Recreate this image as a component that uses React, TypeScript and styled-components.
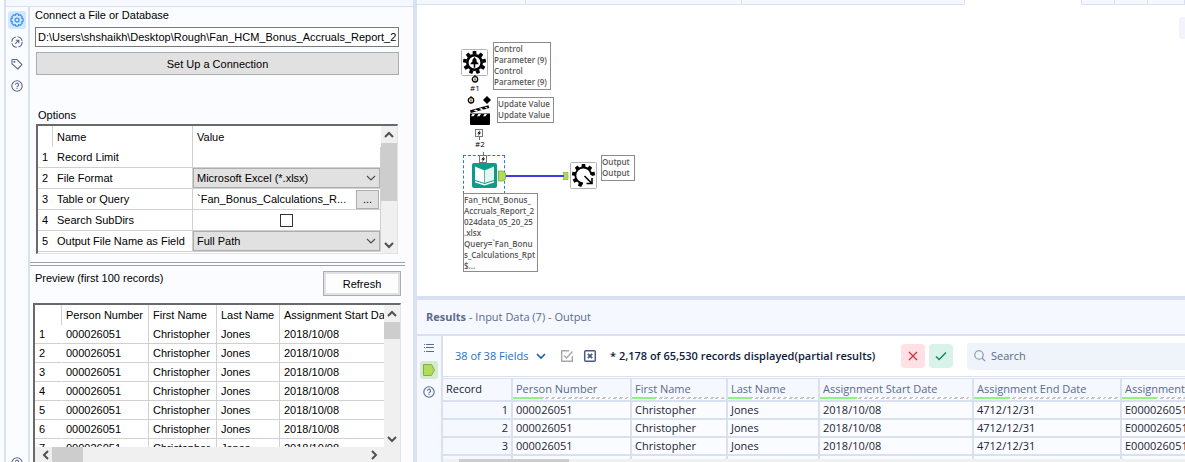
import React from "react";
import styled, { createGlobalStyle, css } from "styled-components";

const line = "#d9e1f0";
const wash = "#f5f8fe";
const slate = "#5b6b8c";
const formFont = '"Liberation Sans", Arial, sans-serif';
const appFont = '"Open Sans", "Noto Sans", "Segoe UI", sans-serif';

const GlobalStyle = createGlobalStyle`
  *, *::before, *::after { box-sizing: border-box; }
  body { margin: 0; overflow: hidden; background: #fff; }
  button, input, select { font: inherit; color: inherit; margin: 0; }
`;

/* ---------- shell ---------- */

const Shell = styled.div`
  display: flex;
  height: 100vh;
  font: 11px/16px ${appFont};
  color: #1b2333;
`;

const ConfigPane = styled.aside`
  flex: 0 0 417px;
  display: flex;
  flex-direction: column;
  padding-left: 4px;
  background: #fafcff;
  border-right: 4px solid ${line};
`;

const ConfigTop = styled.div`
  flex: 0 0 7px;
  background: ${wash};
  border-left: 2px solid ${line};
  border-bottom: 1px solid ${line};
`;

const ConfigBody = styled.div`
  flex: 1;
  min-height: 0;
  display: flex;
  border-left: 2px solid ${line};
`;

const Rail = styled.nav<{ $tone?: string; $width: number; $top: number }>`
  flex: 0 0 ${(p) => p.$width}px;
  display: flex;
  flex-direction: column;
  align-items: center;
  gap: 4px;
  padding-top: ${(p) => p.$top}px;
  color: ${slate};
  background: ${(p) => p.$tone ?? "#fafcff"};
  border-right: 2px solid ${line};
  overflow: hidden;
`;

const RailButton = styled.button<{ $active?: string; $last?: boolean }>`
  flex: 0 0 18px;
  width: 18px;
  display: grid;
  place-items: center;
  padding: 0;
  border: 0;
  border-radius: 3px;
  background: ${(p) => p.$active ?? "transparent"};
  ${(p) => p.$last && css`margin-top: auto; margin-bottom: -10px;`}
`;

const Form = styled.section`
  flex: 1;
  min-width: 0;
  display: flex;
  flex-direction: column;
  font: 11px/16px ${formFont};
  color: #000;
`;

const Connection = styled.div`
  display: flex;
  flex-direction: column;
  padding: 0 14px 0 5px;
`;

const PathInput = styled.input`
  height: 20px;
  margin-top: 4px;
  padding: 0 2px;
  border: 1px solid #7a7a7a;
  background: #fff;
`;

const ConnectButton = styled.button`
  height: 23px;
  margin: 5px 0 0 1px;
  padding: 0;
  background: #e1e1e1;
  border: 1px solid #adadad;
`;

const OptionsTitle = styled.h2`
  margin: 32px 0 1px 8px;
  font: inherit;
`;

const Sunken = styled.div<{ $kind: "options" | "preview" }>`
  display: grid;
  grid-template-columns: 1fr 16px;
  overflow: hidden;
  background: #fff;
  border: 1px solid #e3e3e3;
  border-top: 2px solid #696969;
  border-left: 2px solid #696969;
  ${(p) =>
    p.$kind === "options"
      ? css`flex: 0 0 130px; margin: 0 15px 0 6px;`
      : css`
          flex: 1;
          min-height: 0;
          margin: 7px 12px 0 3px;
          border-bottom: 0;
          grid-template-rows: 1fr 15px;
        `}
`;

const OptionsTable = styled.table`
  width: 100%;
  align-self: start;
  table-layout: fixed;
  border-collapse: separate;
  border-spacing: 0;
  th, td {
    height: 21px;
    padding: 0 0 0 4px;
    text-align: left;
    font-weight: normal;
    white-space: nowrap;
    border-bottom: 1px solid #d0d0d0;
  }
  thead th { border-bottom: 0; }
  thead th:first-child { border-right: 1px solid #d0d0d0; }
  th:nth-child(2) { border-right: 1px solid #d0d0d0; }
  td { border-right: 1px solid #d0d0d0; }
  td:first-child { border-right: 0; }
  td.control { padding: 0; }
`;

const SelectWrap = styled.div`
  display: grid;
  align-items: center;
  height: 20px;
  > * { grid-area: 1 / 1; }
  svg { justify-self: end; margin-right: 4px; pointer-events: none; }
`;

const Drop = styled.select`
  width: 100%;
  height: 20px;
  appearance: none;
  padding: 0 3px;
  background: #e1e1e1;
  border: 1px solid #adadad;
  border-radius: 0;
`;

const QueryCell = styled.div`
  display: flex;
  align-items: center;
  height: 20px;
  padding-left: 4px;
  span { flex: 1; overflow: hidden; }
`;

const DotsButton = styled.button`
  width: 23px;
  height: 19px;
  margin-right: 1px;
  padding: 0;
  line-height: 14px;
  background: #e1e1e1;
  border: 1px solid #adadad;
`;

const TickCell = styled.div`
  display: grid;
  place-items: center;
  height: 20px;
`;

const Tick = styled.input`
  appearance: none;
  width: 13px;
  height: 13px;
  background: #fff;
  border: 1px solid #333;
`;

const Bar = styled.div<{ $across?: boolean }>`
  display: flex;
  flex-direction: ${(p) => (p.$across ? "row" : "column")};
  align-items: center;
  background: #f0f0f0;
  ${(p) => p.$across && css`grid-column: 1 / -1; padding: 0 20px 0 4px;`}
`;

const Thumb = styled.div<{ $size: number }>`
  flex: 0 0 ${(p) => p.$size}px;
  align-self: stretch;
  background: #cdcdcd;
`;

const Arrow = styled.span<{ $size: number; $end?: boolean; $across?: boolean }>`
  flex: 0 0 ${(p) => p.$size}px;
  display: grid;
  place-items: center;
  ${(p) => p.$end && (p.$across ? css`margin-left: auto;` : css`margin-top: auto;`)}
`;

const Splitter = styled.div`
  flex: 0 0 4px;
  margin: 8px 8px 0 0;
  border: solid #a0a0a0;
  border-width: 1px 0;
`;

const PreviewHead = styled.div`
  display: flex;
  align-items: flex-start;
  justify-content: space-between;
  margin: 4px 12px 0 5px;
`;

const RefreshButton = styled.button`
  width: 78px;
  height: 25px;
  margin-top: 1px;
  padding: 0;
  background: #fdfdfd;
  border: 1px solid #adadad;
  box-shadow: inset 0 0 0 2px #e1e1e1;
`;

const Clip = styled.div`
  min-width: 0;
  min-height: 0;
  overflow: hidden;
`;

const PreviewTable = styled.table`
  width: 380px;
  table-layout: fixed;
  border-collapse: separate;
  border-spacing: 0;
  th, td {
    height: 19px;
    padding: 0 0 0 4px;
    text-align: left;
    font-weight: normal;
    white-space: nowrap;
    overflow: hidden;
    border-right: 1px solid #d0d0d0;
  }
  th { height: 20px; }
  td { border-bottom: 1px solid #d0d0d0; }
  td:first-child { border-right-color: transparent; }
`;

/* ---------- workspace ---------- */

const Workspace = styled.main`
  flex: 1;
  min-width: 0;
  display: flex;
  flex-direction: column;
`;

const TabStrip = styled.div`
  flex: 0 0 5px;
  display: flex;
  background: ${wash};
`;

const Tab = styled.div<{ $width?: number; $open?: boolean }>`
  flex: ${(p) => (p.$width ? `0 0 ${p.$width}px` : "1")};
  border-right: 1px solid ${line};
  border-bottom: 1px solid ${line};
  ${(p) => p.$open && css`background: #fff; border-bottom-color: #fff;`}
`;

const Canvas = styled.section`
  flex: 1;
  min-height: 0;
  position: relative;
  overflow: hidden;
  background: #fff;
`;

const Placed = styled.div<{ $x: number; $y: number }>`
  position: absolute;
  left: ${(p) => p.$x}px;
  top: ${(p) => p.$y}px;
  svg { display: block; }
`;

const Note = styled(Placed)<{ $w: number; $tall?: boolean }>`
  width: ${(p) => p.$w}px;
  padding-bottom: ${(p) => (p.$tall ? 0 : 2)}px;
  border: 1px solid #8c8c8c;
  background: #fff;
  font: 600 8px/11px ${appFont};
  color: #585858;
  white-space: pre;
`;

const Mark = styled(Placed)`
  font: 8px/10px ${appFont};
  color: #000;
`;

const Selection = styled(Placed)`
  width: 42px;
  height: 39px;
  border: 1px dashed #1c7fd6;
`;

const EdgeButton = styled.button`
  position: absolute;
  right: -18px;
  top: 12px;
  width: 24px;
  height: 22px;
  border: 0;
  border-radius: 4px;
  background: #f3f4fb;
`;

const Results = styled.section`
  flex: 0 0 166px;
  min-height: 0;
  display: flex;
  flex-direction: column;
  border-top: 4px solid ${line};
  background: #fff;
`;

const ResultsTitle = styled.h2`
  flex: 0 0 36px;
  margin: 0;
  padding-left: 9px;
  font: 11px/34px ${appFont};
  color: ${slate};
  background: ${wash};
  border-bottom: 2px solid ${line};
`;

const ResultsBody = styled.div`
  flex: 1;
  min-height: 0;
  display: flex;
`;

const ResultsMain = styled.div`
  flex: 1;
  min-width: 0;
  display: flex;
  flex-direction: column;
`;

const Toolbar = styled.div`
  flex: 0 0 41px;
  display: flex;
  align-items: center;
  padding-left: 12px;
  border-bottom: 1px solid ${line};
  overflow: hidden;
`;

const FieldsButton = styled.button`
  flex: 0 0 91px;
  display: flex;
  align-items: center;
  justify-content: space-between;
  padding: 0;
  border: 0;
  background: none;
  color: #1a6fc9;
`;

const IconButton = styled.button<{ $gap: number }>`
  display: grid;
  padding: 0;
  margin-left: ${(p) => p.$gap}px;
  border: 0;
  background: none;
`;

const Status = styled.strong`
  flex: 0 0 291px;
  margin-left: 13px;
  white-space: nowrap;
  font-weight: 600;
  color: #0c1b3d;
`;

const ActionButton = styled.button<{ $bg: string }>`
  flex: 0 0 24px;
  height: 24px;
  display: grid;
  place-items: center;
  margin-right: 4px;
  padding: 0;
  border: 0;
  border-radius: 4px;
  background: ${(p) => p.$bg};
`;

const SearchBox = styled.label`
  flex: 1;
  display: flex;
  align-items: center;
  gap: 5px;
  height: 27px;
  margin-left: 10px;
  padding-left: 7px;
  border-radius: 4px 0 0 4px;
  background: #eff3fa;
  input {
    flex: 1;
    min-width: 0;
    padding: 0;
    border: 0;
    background: none;
    outline: 0;
  }
  input::placeholder { color: ${slate}; opacity: 1; }
`;

const GridClip = styled.div`
  flex: 1;
  min-height: 0;
  margin-top: 1px;
  overflow: hidden;
  border-top: 1px solid ${line};
`;

const DataGrid = styled.table`
  width: 829px;
  table-layout: fixed;
  border-collapse: separate;
  border-spacing: 0;
  th, td {
    padding: 0 0 0 3px;
    text-align: left;
    font-weight: normal;
    white-space: nowrap;
    overflow: hidden;
    border-right: 2px solid ${line};
    border-bottom: 2px solid ${line};
  }
  th {
    height: 23px;
    padding: 0;
    vertical-align: top;
    background: ${wash};
    color: ${slate};
  }
  td { height: 18px; line-height: 16px; background: #fbfcff; color: #1b2333; }
  th:first-child { color: #1b2333; }
  td:first-child { text-align: right; padding-right: 3px; background: ${wash}; }
`;

const HeadLabel = styled.div`
  height: 18px;
  padding-left: 3px;
  line-height: 20px;
`;

const Quality = styled.div<{ $ok: number }>`
  display: flex;
  height: 2px;
  margin-right: 2px;
  background: repeating-linear-gradient(135deg, #c4c4c4 0 2px, #fff 2px 4px);
  &::before {
    content: "";
    width: ${(p) => p.$ok}px;
    background: #93f27c;
  }
`;

const GridScroll = styled.div`
  flex: 0 0 3px;
  padding-left: 16px;
  background: #f0f0f0;
  &::before {
    content: "";
    display: block;
    width: 110px;
    height: 3px;
    background: #cdcdcd;
  }
`;

/* ---------- drawings ---------- */

const Chevron = ({ turn = 0, size = 10, color = "#505050", weight = 2 }) => (
  <svg width={size} height={size} viewBox="0 0 10 10" fill="none" stroke={color} strokeWidth={weight} aria-hidden>
    <path d="M1 3 L5 7 L9 3" transform={`rotate(${turn} 5 5)`} />
  </svg>
);

const HelpIcon = () => (
  <svg width="12" height="12" viewBox="0 0 12 12" fill="none" stroke="currentColor" strokeWidth="1.1" aria-hidden>
    <circle cx="6" cy="6" r="5.2" />
    <path d="M4.4 4.7a1.6 1.6 0 1 1 2.3 1.5c-.5.3-.7.5-.7 1" />
    <path d="M6 8v1.1" />
  </svg>
);

const CogIcon = () => (
  <svg width="14" height="14" viewBox="0 0 12 12" fill="none" stroke="#3d93f5" aria-hidden>
    <path
      d="M4.9 .8h2.2l.4 1.3 1.2-.6 1.8 1.8-.6 1.2 1.3.4v2.2l-1.3.4.6 1.2-1.8 1.8-1.2-.6-.4 1.3H4.9l-.4-1.3-1.2.6-1.8-1.8.6-1.2-1.3-.4V4.9l1.3-.4-.6-1.2 1.8-1.8 1.2.6z"
      strokeLinejoin="round"
      strokeWidth="1.1"
    />
    <circle cx="6" cy="6" r="1.7" strokeWidth="1.1" />
  </svg>
);

const TargetIcon = () => (
  <svg width="12" height="12" viewBox="0 0 12 12" fill="none" stroke="currentColor" strokeWidth="1.1" aria-hidden>
    <circle cx="6" cy="6" r="5.2" strokeDasharray="6.5 1.6" />
    <path d="M4.2 7.8l3.4-3.4M4.8 4.2h3v3" />
  </svg>
);

const TagIcon = () => (
  <svg width="12" height="12" viewBox="0 0 12 12" fill="none" stroke="currentColor" strokeWidth="1.1" strokeLinejoin="round" aria-hidden>
    <path d="M1 1.5h4.8l5.2 5.2-4.2 4.3L1 5.8z" />
    <circle cx="3.4" cy="3.8" r=".5" />
  </svg>
);

const ListIcon = () => (
  <svg width="12" height="10" viewBox="0 0 12 10" stroke="currentColor" strokeWidth="1" aria-hidden>
    <path d="M1 1.5h1M3 1.5h8M1 4.5h1M3 4.5h8M1 8.5h1M3 8.5h8" />
  </svg>
);

const AnchorIcon = () => (
  <svg width="14" height="14" viewBox="0 0 14 14" aria-hidden>
    <path d="M1.5 1.5h8l3 5.5-3 5.5h-8z" fill="#b4da5c" stroke="#84b040" />
  </svg>
);

const teeth = (count: number, skip: number[] = []) =>
  Array.from({ length: count }, (_, i) => i)
    .filter((i) => !skip.includes(i))
    .map((i) => (
      <path key={i} d="M11.5 5.5l.3-3.5h3.4l.3 3.5z" transform={`rotate(${(360 / count) * i} 13.5 13.5)`} />
    ));

const ControlTool = () => (
  <svg width="27" height="27" viewBox="0 0 27 27" aria-hidden>
    <rect x=".5" y=".5" width="26" height="26" rx="1" fill="#fff" stroke="#b4b4b4" />
    {teeth(9)}
    <circle cx="13.5" cy="13.5" r="7.2" fill="#fff" stroke="#000" strokeWidth="2.6" />
    <path d="M13.5 8l2.6 3.4h-1.2l3 3.9h-3.6v3.5h-1.6v-3.5H9.1l3-3.9h-1.2z" />
  </svg>
);

const OutputTool = () => (
  <svg width="27" height="27" viewBox="0 0 27 27" aria-hidden>
    <rect x=".5" y=".5" width="26" height="26" rx="1" fill="#fff" stroke="#b4b4b4" />
    {teeth(9, [3, 4])}
    <path d="M21.4 13A8 8 0 1 0 13 21.5" fill="none" stroke="#000" strokeWidth="1.8" />
    <path d="M14.5 14l7 7M22 16v5.5h-5.5" fill="none" stroke="#000" strokeWidth="1.6" />
  </svg>
);

const ActionTool = () => (
  <svg width="22" height="21" viewBox="0 0 22 21" aria-hidden>
    <path d="M1 8.5h20V19a1 1 0 0 1-1 1H2a1 1 0 0 1-1-1z" />
    <path d="M3.5 9L2 11.3h2.5L6 9zM9.5 9L8 11.3h2.5L12 9zM15.5 9L14 11.3h2.5L18 9z" fill="#fff" />
    <path d="M1 5.2L19.5 .3l.8 2.7L1.8 7.9z" />
    <path d="M4.5 5.2l2.6 1.3 2.2-.6-2.6-1.3zM10 3.7l2.6 1.3 2.2-.6-2.6-1.3zM15.5 2.2l2.3 1.3 1.2-.3-2-1.4z" fill="#fff" />
  </svg>
);

const BookTool = () => (
  <svg width="25" height="25" viewBox="0 0 25 25" aria-hidden>
    <rect width="25" height="25" rx="2" fill="#0c9d8a" />
    <path d="M3 3.5L12.5 7.5V20L3 17z" fill="#fff" />
    <path d="M22 3.5L12.5 7.5V20l9.5-3z" fill="#e4f5f2" />
    <path d="M3 18v1.5l9.5 3 9.5-3V18l-9.5 3z" fill="#fff" />
    <path d="M12.5 7.5V20" stroke="#0c9d8a" strokeWidth=".6" />
  </svg>
);

const RingMark = () => (
  <svg width="8" height="8" viewBox="0 0 8 8" aria-hidden>
    <circle cx="4" cy="4.3" r="2.7" fill="#fff" stroke="#000" strokeWidth="1.3" />
    <path d="M4 2.6l1.6 2.8H2.4z" fill="#b0702c" />
    <path d="M4 0v1.5" stroke="#000" />
  </svg>
);

const Diamond = () => (
  <svg width="8" height="8" viewBox="0 0 8 8" aria-hidden>
    <path d="M4 0l4 4-4 4-4-4z" />
  </svg>
);

const BoltMark = ({ lead = false }) => (
  <svg width="8" height="12" viewBox="0 0 8 12" aria-hidden>
    <path d={lead ? "M4.5 0v3" : "M4.5 8v3"} stroke="#1f9a4a" />
    <g transform={lead ? "translate(0 3)" : undefined}>
      <rect x=".5" y=".5" width="7" height="7" fill="#fff" stroke="#777" />
      <path d="M5.3 1L2.2 4.4H4L2.8 7.2 6.2 3.5H4.3z" />
    </g>
  </svg>
);

const Wire = () => (
  <svg width="71" height="12" viewBox="0 0 71 12" aria-hidden>
    <path d="M8 6h58" stroke="#3c3ce6" strokeWidth="2" />
    <path d="M.5 1H5l2.500 2v6L5 11H.5z" fill="#b4da5c" stroke="#8ab845" />
    <path d="M65 2.500h5v7h-5l1.500-3.500z" fill="#b4da5c" stroke="#8ab845" strokeWidth=".8" />
  </svg>
);

const CheckBoxIcon = () => (
  <svg width="14" height="14" viewBox="0 0 14 14" fill="none" stroke="#a8a8a8" strokeWidth="1.4" aria-hidden>
    <path d="M9 1.7H1.7v10.6h10.6V7" />
    <path d="M4 6.5L6.5 9l6-6.5" />
  </svg>
);

const CrossBoxIcon = () => (
  <svg width="14" height="14" viewBox="0 0 14 14" fill="none" stroke="#4b5b80" strokeWidth="1.5" aria-hidden>
    <rect x="1.7" y="1.7" width="10.6" height="10.6" rx="1" />
    <path d="M4.8 4.8l4.4 4.4M9.2 4.8L4.8 9.2" strokeWidth="1.9" />
  </svg>
);

const options = ["Record Limit", "File Format", "Table or Query", "Search SubDirs", "Output File Name as Field"];
const previewRows = [1, 2, 3, 4, 5, 6, 7];
const columns = [
  { title: "Person Number", value: "000026051", width: 119, ok: 28 },
  { title: "First Name", value: "Christopher", width: 96, ok: 24 },
  { title: "Last Name", value: "Jones", width: 92, ok: 22 },
  { title: "Assignment Start Date", value: "2018/10/08", width: 154, ok: 37 },
  { title: "Assignment End Date", value: "4712/12/31", width: 148, ok: 36 },
  { title: "Assignment Number", value: "E000026051", width: 150, ok: 35 },
];

const Dropdown = ({ label, value }: { label: string; value: string }) => (
  <SelectWrap>
    <Drop aria-label={label} defaultValue={value}>
      <option>{value}</option>
    </Drop>
    <Chevron weight={1.2} />
  </SelectWrap>
);

const optionControl = (name: string) => {
  switch (name) {
    case "File Format":
      return <Dropdown label={name} value="Microsoft Excel (*.xlsx)" />;
    case "Table or Query":
      return (
        <QueryCell>
          <span>`Fan_Bonus_Calculations_R...</span>
          <DotsButton aria-label="Edit query">...</DotsButton>
        </QueryCell>
      );
    case "Search SubDirs":
      return (
        <TickCell>
          <Tick type="checkbox" aria-label={name} />
        </TickCell>
      );
    case "Output File Name as Field":
      return <Dropdown label={name} value="Full Path" />;
    default:
      return null;
  }
};

const Configuration = () => (
  <ConfigPane>
    <ConfigTop />
    <ConfigBody>
      <Rail $width={24} $top={4} aria-label="Configuration">
        <RailButton $active="#d3e7ff" aria-label="Settings"><CogIcon /></RailButton>
        <RailButton aria-label="Navigation"><TargetIcon /></RailButton>
        <RailButton aria-label="Annotation"><TagIcon /></RailButton>
        <RailButton aria-label="Help"><HelpIcon /></RailButton>
        <RailButton $last aria-label="More help"><HelpIcon /></RailButton>
      </Rail>
      <Form>
        <Connection>
          <label htmlFor="path">Connect a File or Database</label>
          <PathInput id="path" defaultValue="D:\Users\shshaikh\Desktop\Rough\Fan_HCM_Bonus_Accruals_Report_2024data_05_20_25.xlsx" />
          <ConnectButton>Set Up a Connection</ConnectButton>
        </Connection>
        <OptionsTitle>Options</OptionsTitle>
        <Sunken $kind="options">
          <OptionsTable>
            <colgroup>
              <col width="15" />
              <col width="140" />
              <col />
            </colgroup>
            <thead>
              <tr><th /><th>Name</th><th>Value</th></tr>
            </thead>
            <tbody>
              {options.map((name, i) => (
                <tr key={name}>
                  <td>{i + 1}</td>
                  <td>{name}</td>
                  <td className="control">{optionControl(name)}</td>
                </tr>
              ))}
            </tbody>
          </OptionsTable>
          <Bar>
            <Arrow $size={17}><Chevron turn={180} /></Arrow>
            <Thumb $size={58} />
            <Arrow $size={17} $end><Chevron /></Arrow>
          </Bar>
        </Sunken>
        <Splitter />
        <PreviewHead>
          <span>Preview (first 100 records)</span>
          <RefreshButton>Refresh</RefreshButton>
        </PreviewHead>
        <Sunken $kind="preview">
          <Clip>
            <PreviewTable>
              <colgroup>
                <col width="27" />
                <col width="87" />
                <col width="68" />
                <col width="63" />
                <col />
              </colgroup>
              <thead>
                <tr><th /><th>Person Number</th><th>First Name</th><th>Last Name</th><th>Assignment Start Date</th></tr>
              </thead>
              <tbody>
                {previewRows.map((n) => (
                  <tr key={n}>
                    <td>{n}</td><td>000026051</td><td>Christopher</td><td>Jones</td><td>2018/10/08</td>
                  </tr>
                ))}
              </tbody>
            </PreviewTable>
          </Clip>
          <Bar>
            <Arrow $size={17}><Chevron turn={180} /></Arrow>
            <Thumb $size={17} />
            <Arrow $size={17} $end><Chevron /></Arrow>
          </Bar>
          <Bar $across>
            <Arrow $size={13}><Chevron turn={90} /></Arrow>
            <Thumb $size={31} />
            <Arrow $size={13} $end $across><Chevron turn={270} /></Arrow>
          </Bar>
        </Sunken>
      </Form>
    </ConfigBody>
  </ConfigPane>
);

const Workflow = () => (
  <Canvas>
    <Placed $x={44} $y={44}><ControlTool /></Placed>
    <Placed $x={54} $y={70}><RingMark /></Placed>
    <Mark $x={53} $y={78}>#1</Mark>
    <Note $x={76} $y={37} $w={58}>{"Control\nParameter (9)\nControl\nParameter (9)"}</Note>

    <Placed $x={50} $y={91}><RingMark /></Placed>
    <Placed $x={66} $y={91}><Diamond /></Placed>
    <Placed $x={52} $y={100}><ActionTool /></Placed>
    <Placed $x={58} $y={124}><BoltMark /></Placed>
    <Mark $x={58} $y={134}>#2</Mark>
    <Note $x={80} $y={92} $w={57}>{"Update Value\nUpdate Value"}</Note>

    <Selection $x={46} $y={150} />
    <Placed $x={62} $y={147}><BoltMark lead /></Placed>
    <Placed $x={55} $y={158}><BookTool /></Placed>
    <Placed $x={81} $y={165}><Wire /></Placed>
    <Placed $x={153} $y={157}><OutputTool /></Placed>
    <Note $x={184} $y={150} $w={34}>{"Output\nOutput"}</Note>
    <Note $x={46} $y={188} $w={75} $tall>
      {"Fan_HCM_Bonus_\nAccruals_Report_2\n024data_05_20_25\n.xlsx\nQuery=`Fan_Bonu\ns_Calculations_Rpt\n$..."}
    </Note>
    <EdgeButton aria-label="Canvas tools" />
  </Canvas>
);

const ResultsPanel = () => (
  <Results>
    <ResultsTitle><b>Results</b> - Input Data (7) - Output</ResultsTitle>
    <ResultsBody>
      <Rail $width={26} $top={3} $tone={wash} aria-label="Results">
        <RailButton aria-label="Messages"><ListIcon /></RailButton>
        <RailButton $active="#d5ebd0" aria-label="Output anchor"><AnchorIcon /></RailButton>
        <RailButton aria-label="Results help"><HelpIcon /></RailButton>
      </Rail>
      <ResultsMain>
        <Toolbar>
          <FieldsButton>38 of 38 Fields <Chevron color="#1a5fa8" weight={1.6} /></FieldsButton>
          <IconButton $gap={14} aria-label="Select all"><CheckBoxIcon /></IconButton>
          <IconButton $gap={9} aria-label="Clear all"><CrossBoxIcon /></IconButton>
          <Status>* 2,178 of 65,530 records displayed(partial results)</Status>
          <ActionButton $bg="#ffe0e4" aria-label="Discard">
            <svg width="12" height="12" viewBox="0 0 12 12" stroke="#d62f45" strokeWidth="1.3" aria-hidden><path d="M2 2l8 8M10 2l-8 8" /></svg>
          </ActionButton>
          <ActionButton $bg="#d9f2ea" aria-label="Apply">
            <svg width="12" height="12" viewBox="0 0 12 12" fill="none" stroke="#14875e" strokeWidth="1.4" aria-hidden><path d="M1 6.500l3.200 3L11 2.500" /></svg>
          </ActionButton>
          <SearchBox>
            <svg width="12" height="12" viewBox="0 0 12 12" fill="none" stroke="#7f8fb0" strokeWidth="1.1" aria-hidden>
              <circle cx="5" cy="5" r="4.2" />
              <path d="M8 8l3.200 3.200" />
            </svg>
            <input type="search" placeholder="Search" aria-label="Search" />
          </SearchBox>
        </Toolbar>
        <GridClip>
          <DataGrid>
            <colgroup>
              <col width="70" />
              {columns.map((c) => <col key={c.title} width={c.width} />)}
            </colgroup>
            <thead>
              <tr>
                <th><HeadLabel>Record</HeadLabel></th>
                {columns.map((c) => (
                  <th key={c.title}><HeadLabel>{c.title}</HeadLabel><Quality $ok={c.ok} /></th>
                ))}
              </tr>
            </thead>
            <tbody>
              {[1, 2, 3].map((n) => (
                <tr key={n}>
                  <td>{n}</td>
                  {columns.map((c) => <td key={c.title}>{c.value}</td>)}
                </tr>
              ))}
              <tr>
                <td />
                {columns.map((c) => <td key={c.title} />)}
              </tr>
            </tbody>
          </DataGrid>
        </GridClip>
        <GridScroll />
      </ResultsMain>
    </ResultsBody>
  </Results>
);

export default function App() {
  return (
    <>
      <GlobalStyle />
      <Shell>
        <Configuration />
        <Workspace>
          <TabStrip>
            <Tab $width={109} />
            <Tab $width={216} />
            <Tab $width={223} />
            <Tab $width={117} $open />
            <Tab $width={33} />
            <Tab $width={33} />
            <Tab />
          </TabStrip>
          <Workflow />
          <ResultsPanel />
        </Workspace>
      </Shell>
    </>
  );
}
